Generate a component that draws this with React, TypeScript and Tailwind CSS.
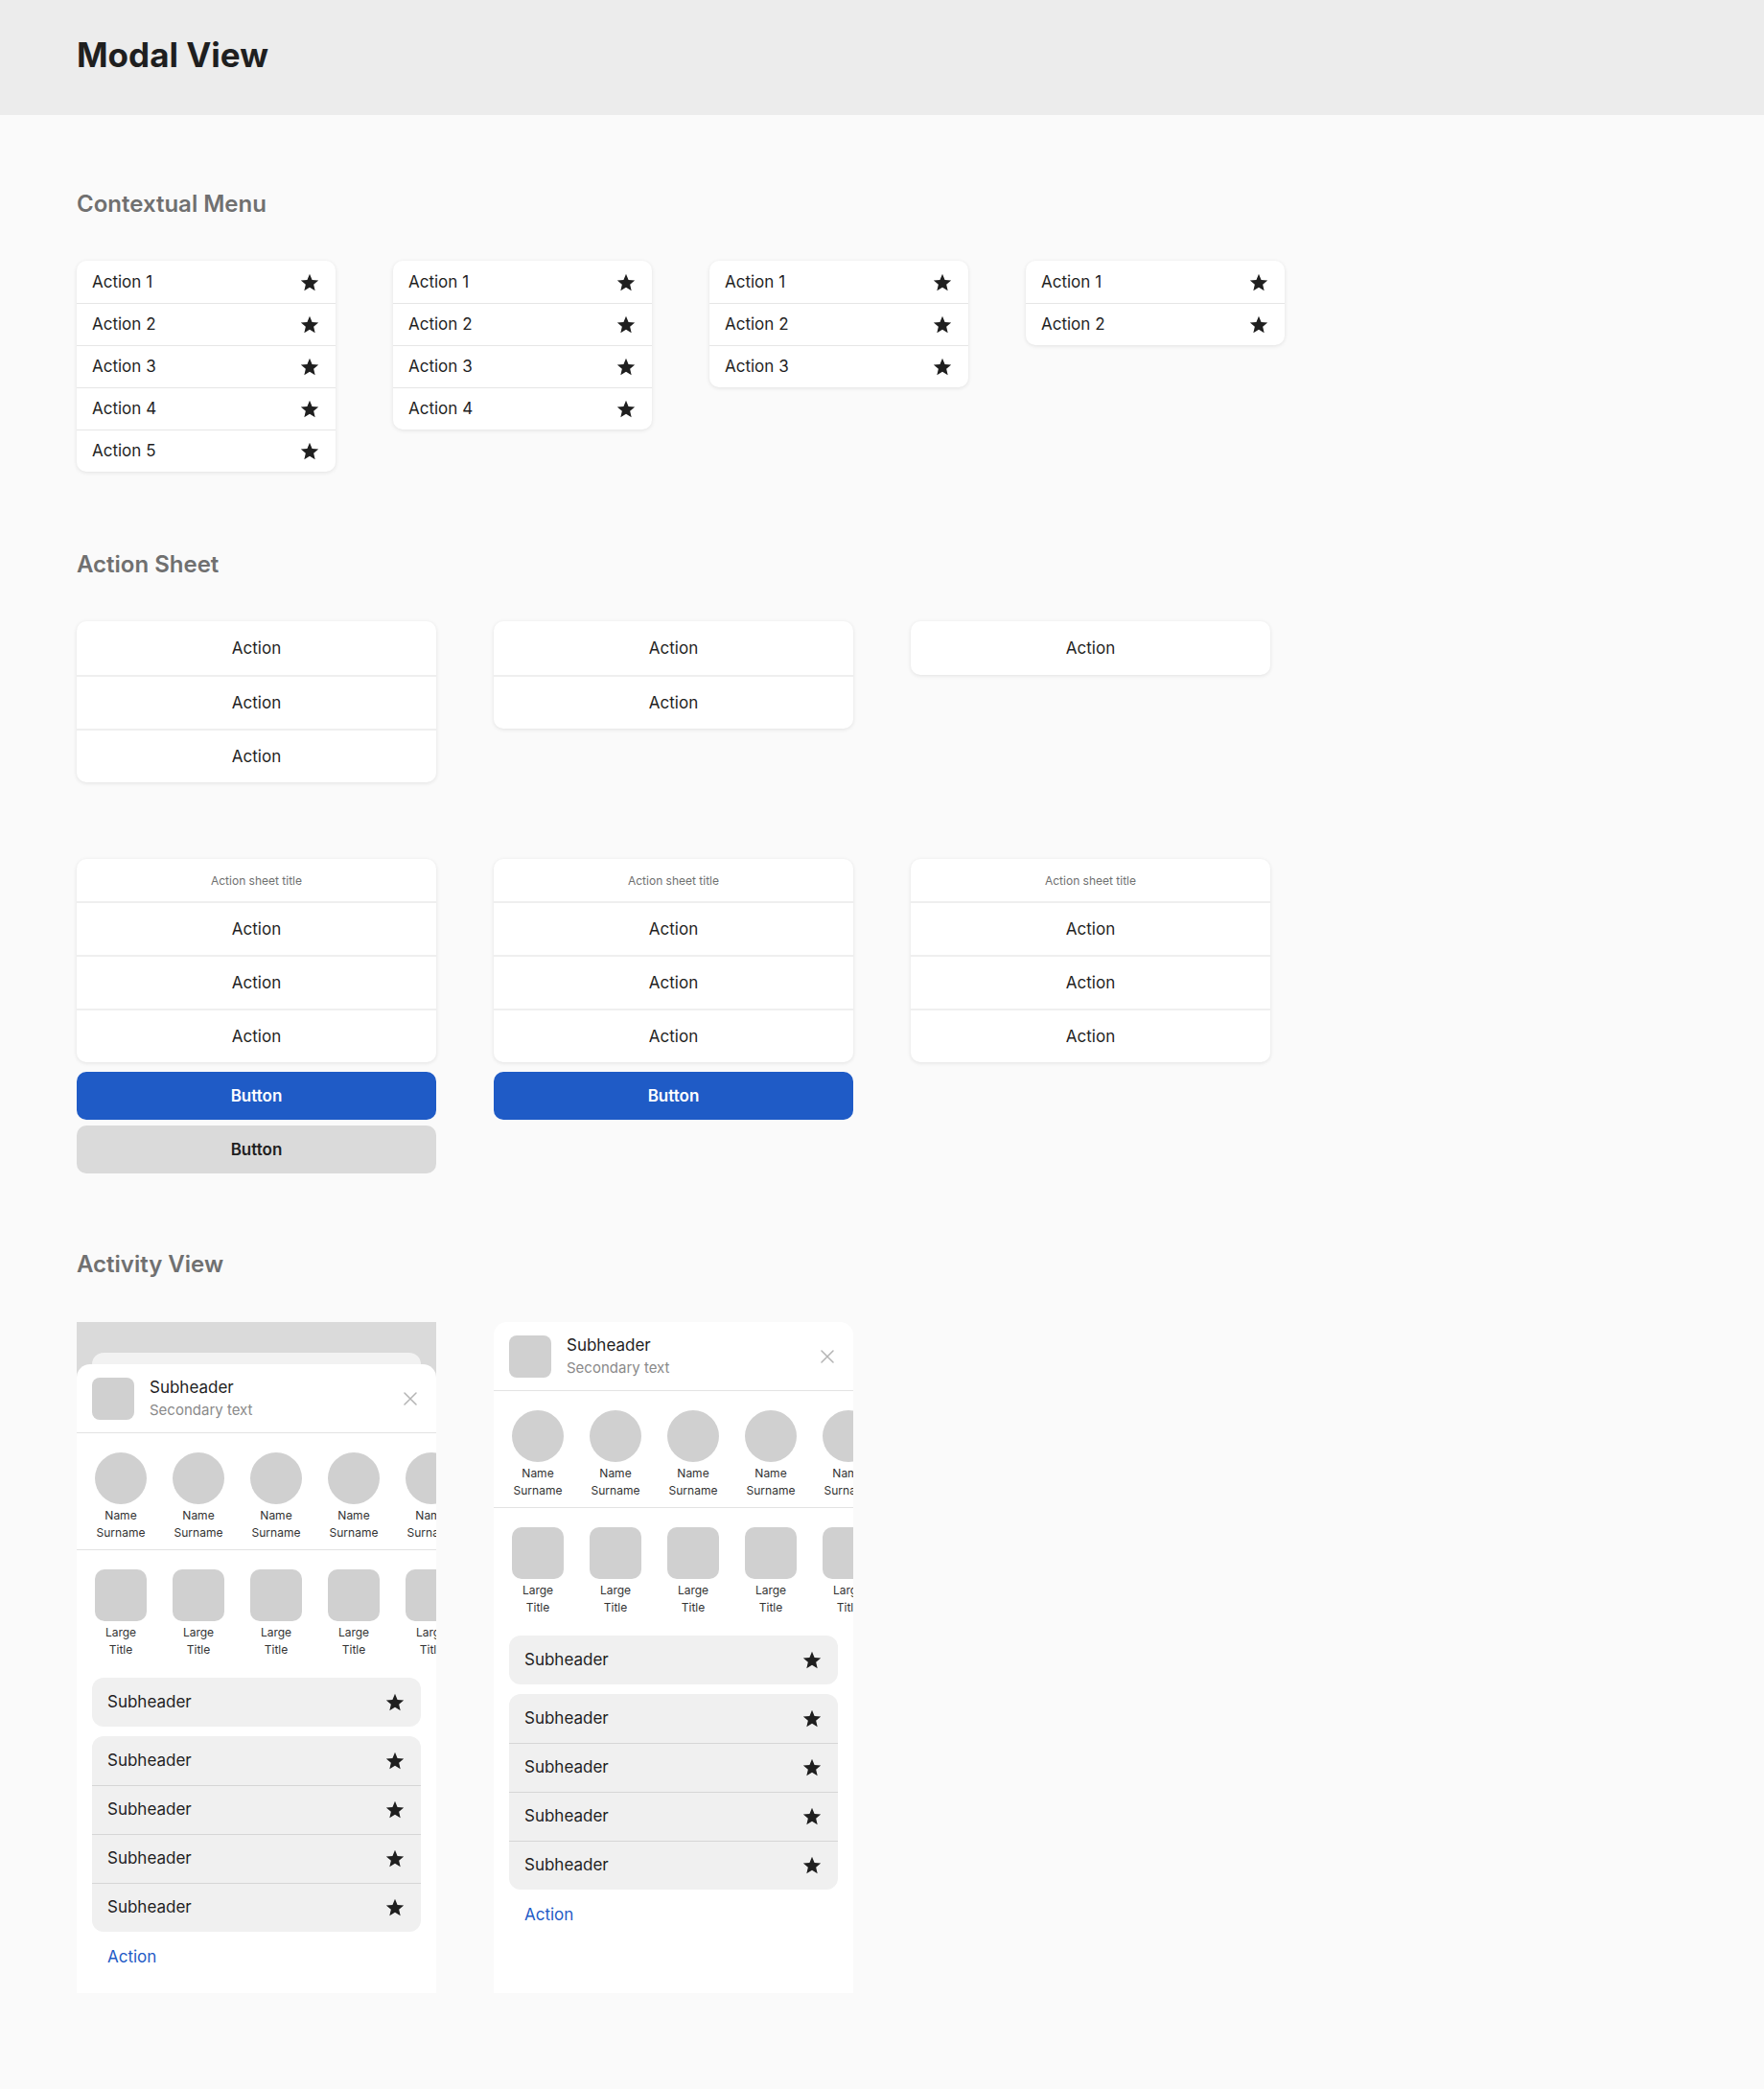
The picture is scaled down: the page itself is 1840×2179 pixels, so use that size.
import React from "react";

const ink = "text-[#1f1f1f]";

function Star() {
  return (
    <svg width="22" height="22" viewBox="0 0 24 24" className="shrink-0 fill-[#1f1f1f]">
      <path d="M12 17.27L18.18 21l-1.64-7.03L22 9.24l-7.19-.61L12 2 9.19 8.63 2 9.24l5.46 4.73L5.82 21z" />
    </svg>
  );
}

function CloseIcon() {
  return (
    <svg width="14" height="14" viewBox="0 0 14 14" className="mr-1 shrink-0">
      <path d="M1 1L13 13M13 1L1 13" stroke="#b4b4b4" strokeWidth="1.5" strokeLinecap="round" />
    </svg>
  );
}

function Heading({ children }: { children: React.ReactNode }) {
  return <h2 className="text-[24px] font-semibold leading-[28px] text-[#707070]">{children}</h2>;
}

function ContextMenu({ count }: { count: number }) {
  return (
    <div className="w-[270px] overflow-hidden rounded-[10px] bg-white shadow-[0_1px_4px_rgba(0,0,0,0.1)]">
      {Array.from({ length: count }, (_, i) => (
        <div
          key={i}
          className={`flex h-[44px] items-center justify-between px-4 pt-px text-[17px] ${ink} ${
            i > 0 ? "border-t border-[#e6e6e6]" : ""
          }`}
        >
          <span>Action {i + 1}</span>
          <Star />
        </div>
      ))}
    </div>
  );
}

function SheetCard({ rows, title }: { rows: number; title?: boolean }) {
  return (
    <div className="w-[375px] overflow-hidden rounded-[10px] bg-white shadow-[0_1px_4px_rgba(0,0,0,0.1)]">
      {title && (
        <div className="flex h-[44px] items-center justify-center pt-[2px] text-[12px] text-[#707070]">
          Action sheet title
        </div>
      )}
      {Array.from({ length: rows }, (_, i) => (
        <div
          key={i}
          className={`flex h-[56px] items-center justify-center pt-px text-[17px] ${ink} ${
            i > 0 || title ? "border-t-2 border-[#efefef]" : ""
          }`}
        >
          Action
        </div>
      ))}
    </div>
  );
}

function SheetButton({ primary }: { primary?: boolean }) {
  return (
    <button
      className={`flex h-[50px] w-[375px] items-center justify-center rounded-[10px] pt-px text-[17px] font-semibold ${
        primary ? "bg-[#1f5bc6] text-white" : "bg-[#dadada] text-[#1f1f1f]"
      }`}
    >
      Button
    </button>
  );
}

function Tile({ round, top, bottom }: { round?: boolean; top: string; bottom: string }) {
  return (
    <div className="flex w-[54px] shrink-0 flex-col items-center">
      <div className={`h-[54px] w-[54px] bg-[#d0d0d0] ${round ? "rounded-full" : "rounded-[10px]"}`} />
      <div className="mt-[3px] whitespace-nowrap text-center text-[12px] leading-[18px] text-[#333333]">
        {top}
        <br />
        {bottom}
      </div>
    </div>
  );
}

function ListRow({ border }: { border?: boolean }) {
  return (
    <div
      className={`flex h-[51px] items-center justify-between px-4 text-[17px] ${ink} ${
        border ? "border-t border-[#d6d6d6]" : ""
      }`}
    >
      <span>Subheader</span>
      <Star />
    </div>
  );
}

function SheetContent() {
  return (
    <div>
      <div className="flex h-[72px] items-center gap-4 border-b border-[#e3e3e3] px-4">
        <div className="h-[44px] w-[44px] shrink-0 rounded-[8px] bg-[#d0d0d0]" />
        <div className="flex-1">
          <div className={`text-[17px] leading-[24px] ${ink}`}>Subheader</div>
          <div className="text-[15px] leading-[24px] text-[#8a8a8a]">Secondary text</div>
        </div>
        <CloseIcon />
      </div>
      <div className="flex gap-[27px] overflow-hidden border-b border-[#e3e3e3] pb-2 pl-[19px] pt-5">
        {[0, 1, 2, 3, 4].map((i) => (
          <Tile key={i} round top="Name" bottom="Surname" />
        ))}
      </div>
      <div className="flex gap-[27px] overflow-hidden pl-[19px] pt-5">
        {[0, 1, 2, 3, 4].map((i) => (
          <Tile key={i} top="Large" bottom="Title" />
        ))}
      </div>
      <div className="mt-5 px-4">
        <div className="flex h-[51px] items-center justify-between rounded-[12px] bg-[#f0f0f0] px-4 text-[17px] text-[#1f1f1f]">
          <span>Subheader</span>
          <Star />
        </div>
        <div className="mt-[10px] overflow-hidden rounded-[12px] bg-[#f0f0f0]">
          <ListRow />
          <ListRow border />
          <ListRow border />
          <ListRow border />
        </div>
        <div className="mt-[14px] pl-4 text-[17px] leading-[24px] text-[#1f5bc6]">Action</div>
      </div>
    </div>
  );
}

export default function App() {
  return (
    <div className="min-h-[2179px] bg-[#fafafa] pb-[100px] font-[Inter,'Noto_Sans',sans-serif]">
      <header className="h-[120px] bg-[#ececec] px-[80px] pt-[37px]">
        <h1 className={`text-[35px] font-bold leading-[40px] ${ink}`}>Modal View</h1>
      </header>

      <main className="px-[80px]">
        <section className="pt-[79px]">
          <Heading>Contextual Menu</Heading>
          <div className="mt-[45px] flex items-start gap-[60px]">
            <ContextMenu count={5} />
            <ContextMenu count={4} />
            <ContextMenu count={3} />
            <ContextMenu count={2} />
          </div>
        </section>

        <section className="pt-[83px]">
          <Heading>Action Sheet</Heading>
          <div className="mt-[45px] flex items-start gap-[60px]">
            <SheetCard rows={3} />
            <SheetCard rows={2} />
            <SheetCard rows={1} />
          </div>
          <div className="mt-[80px] flex items-start gap-[60px]">
            <div className="flex flex-col">
              <SheetCard rows={3} title />
              <div className="mt-[10px]">
                <SheetButton primary />
              </div>
              <div className="mt-[6px]">
                <SheetButton />
              </div>
            </div>
            <div className="flex flex-col">
              <SheetCard rows={3} title />
              <div className="mt-[10px]">
                <SheetButton primary />
              </div>
            </div>
            <SheetCard rows={3} title />
          </div>
        </section>

        <section className="pt-[81px]">
          <Heading>Activity View</Heading>
          <div className="mt-[46px] flex items-start gap-[60px]">
            <div className="flex h-[700px] w-[375px] flex-col overflow-hidden bg-[#dadada]">
              <div className="mx-4 mt-8 h-[12px] shrink-0 rounded-t-[12px] bg-[#f2f2f2]" />
              <div className="min-h-0 flex-1 overflow-hidden rounded-t-[14px] bg-white">
                <SheetContent />
              </div>
            </div>
            <div className="h-[700px] w-[375px] overflow-hidden rounded-t-[14px] bg-white">
              <SheetContent />
            </div>
          </div>
        </section>
      </main>
    </div>
  );
}
